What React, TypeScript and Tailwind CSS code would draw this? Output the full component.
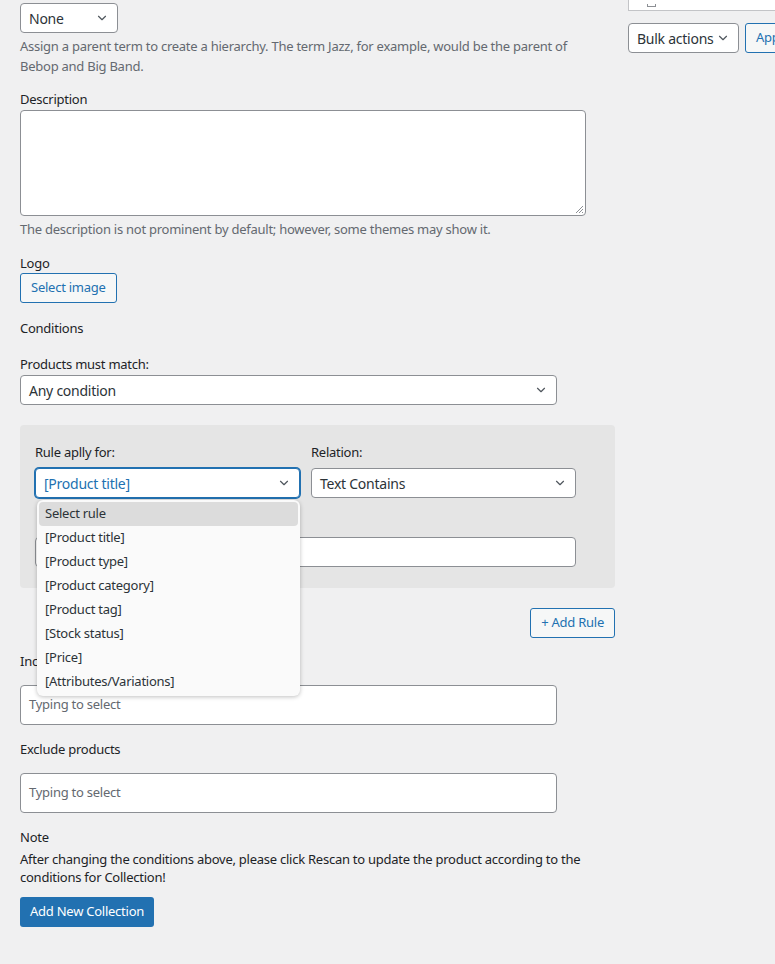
import { ChevronDown } from 'lucide-react';

const ruleOptions = [
  'Select rule',
  '[Product title]',
  '[Product type]',
  '[Product category]',
  '[Product tag]',
  '[Stock status]',
  '[Price]',
  '[Attributes/Variations]',
];

function Select({ value, className = '', focused = false }: { value: string; className?: string; focused?: boolean }) {
  return (
    <div
      className={`flex items-center justify-between h-[30px] bg-white rounded-[4px] pl-[8px] pr-[8px] text-[14px] ${
        focused
          ? 'border border-[#2271b1] shadow-[0_0_0_1px_#2271b1] text-[#2271b1]'
          : 'border border-[#8c8f94] text-[#2c3338]'
      } ${className}`}
    >
      <span>{value}</span>
      <ChevronDown className="w-[14px] h-[14px] text-[#50575e]" strokeWidth={2} />
    </div>
  );
}

export default function App() {
  return (
    <div
      className="min-h-screen bg-[#f0f0f1] flex pl-5 overflow-hidden text-[13px] tracking-[-0.25px] text-[#1d2327]"
      style={{ fontFamily: '"Noto Sans", "Open Sans", sans-serif' }}
    >
      <div className="w-[595px] shrink-0 pt-[3px]">
        <Select value="None" className="w-[98px]" />
        <p className="mt-[3px] text-[#646970] leading-[20px] w-[570px]">
          Assign a parent term to create a hierarchy. The term Jazz, for example, would be the parent of Bebop and Big Band.
        </p>

        <div className="mt-[13px] leading-[20px]">Description</div>
        <div className="mt-[1px] relative w-[566px] h-[106px] bg-white border border-[#8c8f94] rounded-[4px]">
          <svg className="absolute right-[1px] bottom-[1px]" width="10" height="10" viewBox="0 0 10 10">
            <path d="M9 2L2 9M9 5L5 9M9 8L8 9" stroke="#8c8f94" strokeWidth="1" />
          </svg>
        </div>
        <p className="mt-[3px] text-[#646970] leading-[20px]">
          The description is not prominent by default; however, some themes may show it.
        </p>

        <div className="mt-[14px] leading-[20px]">Logo</div>
        <button className="h-[30px] px-[10px] rounded-[3px] border border-[#2271b1] bg-[#f6f7f7] text-[#2271b1] text-[13px]">
          Select image
        </button>

        <div className="mt-[15px] leading-[20px]">Conditions</div>

        <div className="mt-[16px] leading-[20px]">Products must match:</div>
        <Select value="Any condition" className="w-[537px] mt-[1px]" />

        <div className="mt-[20px] rounded-[4px] bg-[#e5e5e5] px-[15px] pt-[17px] pb-[20px] relative">
          <div className="flex gap-[11px]">
            <div className="w-[265px]">
              <div className="leading-[20px]">Rule aplly for:</div>
              <Select value="[Product title]" focused className="mt-[6px]" />
            </div>
            <div className="w-[265px]">
              <div className="leading-[20px]">Relation:</div>
              <Select value="Text Contains" className="mt-[6px]" />
            </div>
          </div>
          <div className="mt-[12px] h-[20px]" />
          <div className="mt-[7px] mb-[1px] h-[30px] w-[541px] bg-white border border-[#8c8f94] rounded-[4px]" />

          <div className="absolute left-[17px] top-[75px] w-[263px] bg-[#fafafa] rounded-[6px] shadow-[0_1px_4px_rgba(0,0,0,0.25)] p-[2px] z-10">
            {ruleOptions.map((opt, i) => (
              <div
                key={opt}
                className={`h-[24px] flex items-center px-[6px] text-[13px] text-[#2c3338] rounded-[4px] ${
                  i === 0 ? 'bg-[#dcdcdc]' : ''
                }`}
              >
                {opt}
              </div>
            ))}
          </div>
        </div>

        <div className="flex justify-end mt-[20px]">
          <button className="h-[30px] px-[10px] rounded-[3px] border border-[#2271b1] bg-[#f6f7f7] text-[#2271b1] text-[13px]">
            + Add Rule
          </button>
        </div>

        <div className="mt-[13px] leading-[20px]">Include products</div>
        <div className="mt-[14px] h-[40px] w-[537px] bg-white border border-[#8c8f94] rounded-[4px] flex items-center px-[8px] text-[#646970]">
          Typing to select
        </div>

        <div className="mt-[14px] leading-[20px]">Exclude products</div>
        <div className="mt-[14px] h-[40px] w-[537px] bg-white border border-[#8c8f94] rounded-[4px] flex items-center px-[8px] text-[#646970]">
          Typing to select
        </div>

        <div className="mt-[14px] leading-[20px]">Note</div>
        <p className="leading-[18px] w-[570px] mt-[3px]">
          After changing the conditions above, please click Rescan to update the product according to the conditions for Collection!
        </p>
        <button className="mt-[11px] h-[30px] px-[10px] rounded-[3px] bg-[#2271b1] text-white text-[13px]">
          Add New Collection
        </button>
      </div>

      <div className="ml-[13px] flex-1 min-w-0">
        <div className="h-[11px] bg-white border border-[#c3c4c7] border-t-0 -mr-4 relative">
          <div className="absolute left-[18px] bottom-[3px] w-[9px] h-[3px] border-b border-x border-[#8c8f94]" />
        </div>
        <div className="mt-[12px] flex gap-[6px] whitespace-nowrap">
          <Select value="Bulk actions" className="w-[111px] shrink-0" />
          <button className="h-[30px] px-[10px] rounded-[3px] border border-[#2271b1] bg-[#f6f7f7] text-[#2271b1] text-[13px] shrink-0">
            Apply
          </button>
        </div>
      </div>
    </div>
  );
}
